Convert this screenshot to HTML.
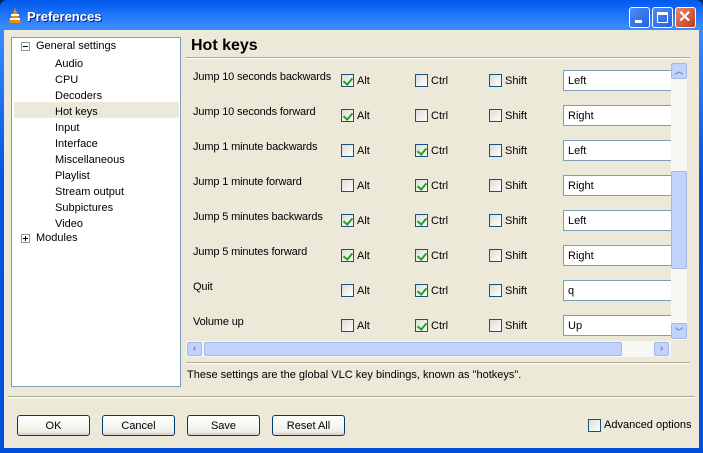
<!DOCTYPE html><html><head><style>
*{margin:0;padding:0;box-sizing:border-box}
body{width:703px;height:453px;overflow:hidden;font-family:Tahoma,"Liberation Sans",sans-serif;font-size:11px;color:#000;background:#0a246a;position:relative}
.a{position:absolute}
#win{left:0;top:0;width:703px;height:453px;background:linear-gradient(#0058ee,#3a8cff 6%,#0053e0 40%,#0050dc 100%);border-radius:7px 7px 0 0}
#body{left:4px;top:30px;width:695px;height:418px;background:#ece9d8}
.cb{position:absolute;width:13px;height:13px;border:1px solid #1c5180;background:linear-gradient(135deg,#dcdcd6,#fff)}
.cb.c::after{content:"";position:absolute;left:3px;top:1px;width:4px;height:7px;border:solid #21a121;border-width:0 2px 2px 0;transform:rotate(40deg)}
.lbl{position:absolute;font-size:11px}
.tf{position:absolute;left:563px;width:108px;height:21px;background:#fff;border:1px solid #7f9db9;border-right:none;padding:4px 4px 0;font-size:11px}
.btn{position:absolute;top:415px;width:73px;height:21px;border:1px solid #003c74;border-radius:3px;background:linear-gradient(#fff,#f0f0ea 80%,#d6d0c5);text-align:center;line-height:20px}
.tb{position:absolute;top:7px;width:21px;height:21px;border:1px solid #fff;border-radius:3px;background:linear-gradient(135deg,#4d8bf7,#2461e0)}
</style></head><body>
<div id="win" class="a"></div>
<div class="a" style="left:8px;top:8px;width:14px;height:16px"><svg width="14" height="16"><polygon points="7,0 13,15 1,15" fill="#f28a00"/><rect x="3" y="6" width="8" height="2" fill="#fff"/><rect x="2" y="10" width="10" height="2" fill="#fff"/></svg></div>
<div class="a" style="left:27px;top:9px;color:#fff;font-weight:bold;font-size:13px;font-family:'Trebuchet MS','Liberation Sans',sans-serif;text-shadow:1px 1px #0a1f7a">Preferences</div>
<div class="tb" style="left:629px"><div class="a" style="left:5px;top:12px;width:7px;height:3px;background:#fff"></div></div>
<div class="tb" style="left:652px"><div class="a" style="left:4px;top:4px;width:11px;height:11px;border:1px solid #fff;border-top-width:3px"></div></div>
<div class="tb" style="left:675px;background:linear-gradient(135deg,#e8876a,#c4391b)"><div class="a" style="left:2px;top:0;color:#fff;font-size:16px;font-weight:bold;line-height:19px">✕</div></div>
<div id="body" class="a"></div>
<div class="a" style="left:11px;top:37px;width:170px;height:350px;background:#fff;border:1px solid #7f9db9"></div>
<div class="a" style="left:21px;top:42px;width:9px;height:9px;border:1px solid #919b9c;background:#fff"><div class="a" style="left:1px;top:3px;width:5px;height:1px;background:#000"></div></div>
<div class="a" style="left:36px;top:40px">General settings</div>
<div class="a" style="left:14px;top:102px;width:165px;height:16px;background:#ece9d8"></div>
<div class="a" style="left:55px;top:56px;line-height:16px">Audio<br>CPU<br>Decoders<br>Hot keys<br>Input<br>Interface<br>Miscellaneous<br>Playlist<br>Stream output<br>Subpictures<br>Video</div>
<div class="a" style="left:21px;top:234px;width:9px;height:9px;border:1px solid #919b9c;background:#fff"><div class="a" style="left:1px;top:3px;width:5px;height:1px;background:#000"></div><div class="a" style="left:3px;top:1px;width:1px;height:5px;background:#000"></div></div>
<div class="a" style="left:36px;top:232px">Modules</div>
<div class="a" style="left:191px;top:37px;font-size:16px;font-weight:bold;font-family:'Liberation Sans',sans-serif">Hot keys</div>
<div class="a" style="left:186px;top:57px;width:504px;height:2px;border-top:1px solid #aca899;border-bottom:1px solid #fff"></div>
<div id="rows"></div>
<script>
var r=[["Jump 10 seconds backwards",1,0,"Left"],["Jump 10 seconds forward",1,0,"Right"],["Jump 1 minute backwards",0,1,"Left"],["Jump 1 minute forward",0,1,"Right"],["Jump 5 minutes backwards",1,1,"Left"],["Jump 5 minutes forward",1,1,"Right"],["Quit",0,1,"q"],["Volume up",0,1,"Up"]];
var h="";r.forEach(function(x,i){var y=80+35*i;
h+='<div class="lbl" style="left:193px;top:'+(y-9)+'px;letter-spacing:-0.15px">'+x[0]+'</div>';
h+='<div class="cb'+(x[1]?' c':'')+'" style="left:341px;top:'+(y-6)+'px"></div><div class="lbl" style="left:357px;top:'+(y-5)+'px">Alt</div>';
h+='<div class="cb'+(x[2]?' c':'')+'" style="left:415px;top:'+(y-6)+'px"></div><div class="lbl" style="left:431px;top:'+(y-5)+'px">Ctrl</div>';
h+='<div class="cb" style="left:489px;top:'+(y-6)+'px"></div><div class="lbl" style="left:505px;top:'+(y-5)+'px">Shift</div>';
h+='<div class="tf" style="top:'+(y-10)+'px">'+x[3]+'</div>';});
document.getElementById("rows").innerHTML=h;
</script>
<div class="a" style="left:671px;top:63px;width:16px;height:277px;background:#f7f7f3"></div>
<div class="a" style="left:671px;top:63px;width:16px;height:16px;background:#c1d3fb;border:1px solid #a3b8e6;border-radius:2px;text-align:center;font-size:9px;color:#4d6185;line-height:14px">︿</div>
<div class="a" style="left:671px;top:171px;width:16px;height:98px;background:#c1d3fb;border:1px solid #a3b8e6;border-radius:2px"></div>
<div class="a" style="left:671px;top:323px;width:16px;height:16px;background:#c1d3fb;border:1px solid #a3b8e6;border-radius:2px;text-align:center;font-size:9px;color:#4d6185;line-height:16px">﹀</div>
<div class="a" style="left:186px;top:341px;width:485px;height:16px;background:#f7f7f3"></div>
<div class="a" style="left:187px;top:342px;width:15px;height:14px;background:#c1d3fb;border:1px solid #a3b8e6;border-radius:2px;font-size:10px;color:#4d6185;text-align:center;line-height:12px">‹</div>
<div class="a" style="left:204px;top:342px;width:418px;height:14px;background:#c1d3fb;border:1px solid #a3b8e6;border-radius:2px"></div>
<div class="a" style="left:654px;top:342px;width:15px;height:14px;background:#c1d3fb;border:1px solid #a3b8e6;border-radius:2px;font-size:10px;color:#4d6185;text-align:center;line-height:12px">›</div>
<div class="a" style="left:186px;top:362px;width:504px;height:2px;border-top:1px solid #aca899;border-bottom:1px solid #fff"></div>
<div class="a" style="left:187px;top:369px">These settings are the global VLC key bindings, known as "hotkeys".</div>
<div class="a" style="left:8px;top:396px;width:687px;height:2px;border-top:1px solid #aca899;border-bottom:1px solid #fff"></div>
<div class="btn" style="left:17px">OK</div>
<div class="btn" style="left:102px">Cancel</div>
<div class="btn" style="left:187px">Save</div>
<div class="btn" style="left:272px">Reset All</div>
<div class="cb" style="left:588px;top:419px"></div>
<div class="a" style="left:604px;top:419px">Advanced options</div>
</body></html>
